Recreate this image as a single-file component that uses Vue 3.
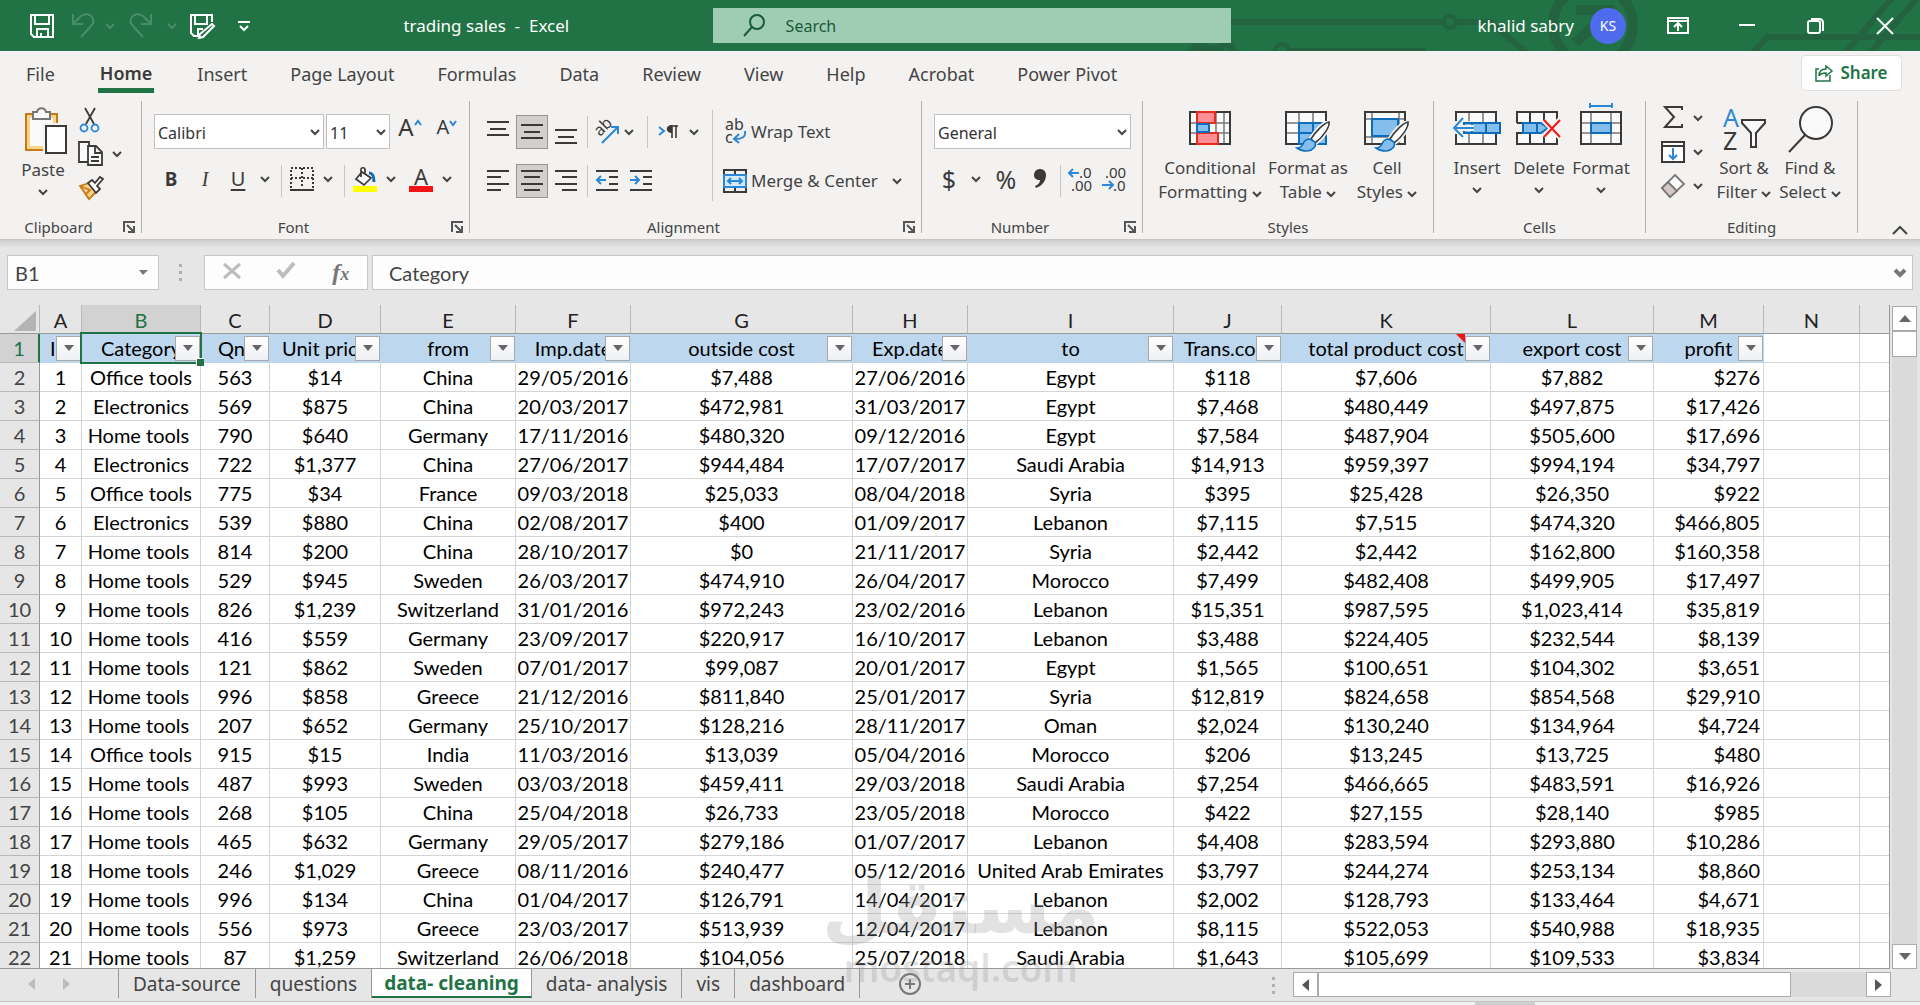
<script setup>
import { ref } from 'vue'

const ribbonTabs = ['File', 'Home', 'Insert', 'Page Layout', 'Formulas', 'Data', 'Review', 'View', 'Help', 'Acrobat', 'Power Pivot']
const activeTab = ref('Home')

const sheets = ['Data-source', 'questions', 'data- cleaning', 'data- analysis', 'vis', 'dashboard']
const activeSheet = ref('data- cleaning')

const cellValue = ref('Category')
const cellName = ref('B1')

const columns = [
  { id: 'A', width: 42, title: 'ID' },
  { id: 'B', width: 119, title: 'Category', selected: true },
  { id: 'C', width: 69, title: 'Qnt' },
  { id: 'D', width: 111, title: 'Unit price' },
  { id: 'E', width: 135, title: 'from' },
  { id: 'F', width: 115, title: 'Imp.date' },
  { id: 'G', width: 222, title: 'outside cost' },
  { id: 'H', width: 115, title: 'Exp.date' },
  { id: 'I', width: 206, title: 'to' },
  { id: 'J', width: 108, title: 'Trans.cost' },
  { id: 'K', width: 209, title: 'total product cost', note: true },
  { id: 'L', width: 163, title: 'export cost' },
  { id: 'M', width: 110, title: 'profit' },
]

const rows = [
  ['1', 'Office tools', '563', '$14', 'China', '29/05/2016', '$7,488', '27/06/2016', 'Egypt', '$118', '$7,606', '$7,882', '$276'],
  ['2', 'Electronics', '569', '$875', 'China', '20/03/2017', '$472,981', '31/03/2017', 'Egypt', '$7,468', '$480,449', '$497,875', '$17,426'],
  ['3', 'Home tools ', '790', '$640', 'Germany', '17/11/2016', '$480,320', '09/12/2016', 'Egypt', '$7,584', '$487,904', '$505,600', '$17,696'],
  ['4', 'Electronics', '722', '$1,377', 'China', '27/06/2017', '$944,484', '17/07/2017', 'Saudi Arabia', '$14,913', '$959,397', '$994,194', '$34,797'],
  ['5', 'Office tools', '775', '$34', 'France', '09/03/2018', '$25,033', '08/04/2018', 'Syria', '$395', '$25,428', '$26,350', '$922'],
  ['6', 'Electronics', '539', '$880', 'China', '02/08/2017', '$400', '01/09/2017', 'Lebanon', '$7,115', '$7,515', '$474,320', '$466,805'],
  ['7', 'Home tools ', '814', '$200', 'China', '28/10/2017', '$0', '21/11/2017', 'Syria', '$2,442', '$2,442', '$162,800', '$160,358'],
  ['8', 'Home tools ', '529', '$945', 'Sweden', '26/03/2017', '$474,910', '26/04/2017', 'Morocco', '$7,499', '$482,408', '$499,905', '$17,497'],
  ['9', 'Home tools ', '826', '$1,239', 'Switzerland', '31/01/2016', '$972,243', '23/02/2016', 'Lebanon', '$15,351', '$987,595', '$1,023,414', '$35,819'],
  ['10', 'Home tools ', '416', '$559', 'Germany', '23/09/2017', '$220,917', '16/10/2017', 'Lebanon', '$3,488', '$224,405', '$232,544', '$8,139'],
  ['11', 'Home tools ', '121', '$862', 'Sweden', '07/01/2017', '$99,087', '20/01/2017', 'Egypt', '$1,565', '$100,651', '$104,302', '$3,651'],
  ['12', 'Home tools ', '996', '$858', 'Greece', '21/12/2016', '$811,840', '25/01/2017', 'Syria', '$12,819', '$824,658', '$854,568', '$29,910'],
  ['13', 'Home tools ', '207', '$652', 'Germany', '25/10/2017', '$128,216', '28/11/2017', 'Oman', '$2,024', '$130,240', '$134,964', '$4,724'],
  ['14', 'Office tools', '915', '$15', 'India', '11/03/2016', '$13,039', '05/04/2016', 'Morocco', '$206', '$13,245', '$13,725', '$480'],
  ['15', 'Home tools ', '487', '$993', 'Sweden', '03/03/2018', '$459,411', '29/03/2018', 'Saudi Arabia', '$7,254', '$466,665', '$483,591', '$16,926'],
  ['16', 'Home tools ', '268', '$105', 'China', '25/04/2018', '$26,733', '23/05/2018', 'Morocco', '$422', '$27,155', '$28,140', '$985'],
  ['17', 'Home tools ', '465', '$632', 'Germany', '29/05/2017', '$279,186', '01/07/2017', 'Lebanon', '$4,408', '$283,594', '$293,880', '$10,286'],
  ['18', 'Home tools ', '246', '$1,029', 'Greece', '08/11/2016', '$240,477', '05/12/2016', 'United Arab Emirates', '$3,797', '$244,274', '$253,134', '$8,860'],
  ['19', 'Home tools ', '996', '$134', 'China', '01/04/2017', '$126,791', '14/04/2017', 'Lebanon', '$2,002', '$128,793', '$133,464', '$4,671'],
  ['20', 'Home tools ', '556', '$973', 'Greece', '23/03/2017', '$513,939', '12/04/2017', 'Lebanon', '$8,115', '$522,053', '$540,988', '$18,935'],
  ['21', 'Home tools ', '87', '$1,259', 'Switzerland', '26/06/2018', '$104,056', '25/07/2018', 'Saudi Arabia', '$1,643', '$105,699', '$109,533', '$3,834'],
]
</script>

<template>
  <div class="excel">
    <svg class="sprite" width="0" height="0" aria-hidden="true">
      <symbol id="chev" viewBox="0 0 10 8"><path d="M1 2l4 4 4-4" fill="none" stroke="currentColor" stroke-width="2" /></symbol>
      <symbol id="launch" viewBox="0 0 13 12">
        <path d="M1 11V1h11M4 4l7 7M11 5v6H5" fill="none" stroke="#555" stroke-width="2" />
      </symbol>
      <symbol id="brush" viewBox="0 0 36 32">
        <path d="M34 1c-5 1-13 9-18 17l4 4C28 16 35 6 34 1z" fill="#fff" stroke="#f3f2f1" stroke-width="5" />
        <path d="M34 1c-5 1-13 9-18 17l4 4C28 16 35 6 34 1z" fill="#fff" stroke="#3b3a39" stroke-width="1.6" />
        <path d="M15 18c-4 0-6 2-7 5-1 2-3 4-6 4 4 3 10 4 14 2s5-5 4-8z" fill="#83beec" stroke="#0f6cbd" stroke-width="1.6" />
      </symbol>
    </svg>

    <header class="titlebar">
      <svg class="circuit" width="740" height="51" viewBox="1180 0 740 51" fill="none" stroke="#24633f" stroke-width="6" aria-hidden="true">
        <path d="M1225 22h218M1457 22h33l38 32M1290 51h136M1765 37h155M1767 37l-16 18M1893-3l-48 56M1918-3l-48 56M1288 50l2 1" />
        <circle cx="1450" cy="22" r="6" stroke-width="4" /><circle cx="1282" cy="51" r="7" stroke-width="4" />
        <circle cx="1213" cy="62" r="23" stroke-width="8" /><path d="M1199 48h25" />
        <circle cx="1593" cy="25" r="40" stroke-width="10" />
        <path d="M1576 10h39M1611 10l-36 33" stroke-width="10" />
      </svg>
      <div class="quick">
        <button class="tb" aria-label="Save">
          <svg width="26" height="26" viewBox="0 0 26 26" fill="none" stroke="#fff" stroke-width="2"><path d="M2 2h22v22H5l-3-3zM6 2v9h14V2M8 24v-8h11v8M12 20v4" /></svg>
        </button>
        <button class="tb dim" aria-label="Undo">
          <svg width="26" height="26" viewBox="0 0 26 26" fill="none" stroke="currentColor" stroke-width="2"><path d="M3 1v10h10M3 11l8-8c4-3 9-2 11 1 3 4 1 7-1 9L11 24" /></svg>
        </button>
        <button class="tb dim" aria-label="Undo list"><svg width="10" height="8"><use href="#chev" /></svg></button>
        <button class="tb dim" aria-label="Redo">
          <svg width="26" height="26" viewBox="0 0 26 26" fill="none" stroke="currentColor" stroke-width="2"><path d="M23 1v10H13M23 11l-8-8c-4-3-9-2-11 1-3 4-1 7 1 9l10 11" /></svg>
        </button>
        <button class="tb dim" aria-label="Redo list"><svg width="10" height="8"><use href="#chev" /></svg></button>
        <button class="tb" aria-label="Save as">
          <svg width="26" height="26" viewBox="0 0 26 26" fill="none" stroke="#fff" stroke-width="2"><path d="M10 23H5l-3-3V2h21v7M6 2v9h12V2M9 23v-7h5M23 11l2 2-11 11-4 1 1-4z" /></svg>
        </button>
        <button class="tb" aria-label="Customize toolbar">
          <svg width="12" height="12" viewBox="0 0 12 12" fill="none" stroke="#fff" stroke-width="2"><path d="M0 2h12M2 6l4 4 4-4" /></svg>
        </button>
      </div>
      <h1 class="title">trading sales&nbsp; -&nbsp; Excel</h1>
      <label class="search">
        <svg width="24" height="24" viewBox="0 0 24 24" fill="none" stroke="#185c37" stroke-width="2"><circle cx="15" cy="8" r="7" /><path d="M10 13L2 22" /></svg>
        <input type="text" placeholder="Search" aria-label="Search" />
      </label>
      <div class="account">
        <span>khalid sabry</span>
        <span class="avatar">KS</span>
      </div>
      <div class="window-buttons">
        <button class="tb" aria-label="Ribbon display options">
          <svg width="22" height="18" viewBox="0 0 22 18" fill="none" stroke="#fff" stroke-width="2"><path d="M1 1h20v15H1zM1 4h20M11 14V7M7 10l4-4 4 4" /></svg>
        </button>
        <button class="tb" aria-label="Minimize"><svg width="16" height="16" viewBox="0 0 16 16" stroke="#fff" stroke-width="2"><path d="M0 7h16" /></svg></button>
        <button class="tb" aria-label="Restore">
          <svg width="18" height="18" viewBox="0 0 18 18" fill="none" stroke="#fff" stroke-width="2"><rect x="1" y="4" width="12" height="12" rx="2" /><path d="M4 2h8c3 0 4 1 4 4v8" /></svg>
        </button>
        <button class="tb" aria-label="Close"><svg width="18" height="18" viewBox="0 0 18 18" stroke="#fff" stroke-width="2"><path d="M1 1l16 16M17 1L1 17" /></svg></button>
      </div>
    </header>

    <nav class="tabs">
      <button v-for="tab in ribbonTabs" :key="tab" class="tab" :class="{ active: tab === activeTab }" @click="activeTab = tab">{{ tab }}</button>
      <button class="share">
        <svg width="18" height="18" viewBox="0 0 18 18" fill="none" stroke="#217346" stroke-width="1.5"><path d="M4 5H1v12h14v-6M4 12c0-5 3-7 7-7V2l6 5-6 5V9c-4 0-6 1-7 3z" /></svg>
        Share
      </button>
    </nav>

    <section class="ribbon">
      <div class="group clipboard">
        <div class="body">
          <button class="big paste">
            <svg width="48" height="48" viewBox="-6 0 48 48">
              <path d="M1 7h31v36H1z" fill="#fbd38a" stroke="#c87a16" stroke-width="2" /><path d="M5 11h23v28H5z" fill="#fafafa" />
              <path d="M8 12V5h4c1-5 8-5 9 0h4v7z" fill="#fafafa" stroke="#797775" stroke-width="2" />
              <path d="M18 16h24v32H18z" fill="#f3f2f1" /><path d="M21 19h20v27H21z" fill="#fff" stroke="#3b3a39" stroke-width="2" />
            </svg>
            <span>Paste</span>
            <svg width="10" height="8"><use href="#chev" /></svg>
          </button>
          <div class="stack">
            <button class="ico" aria-label="Cut">
              <svg width="24" height="26" viewBox="0 0 24 26" fill="none" stroke-width="1.8"><path d="M7 1l9 16M17 1L8 17" stroke="#3b3a39" /><circle cx="6" cy="21" r="3.5" stroke="#2b88d8" /><circle cx="17" cy="21" r="3.5" stroke="#2b88d8" /></svg>
            </button>
            <button class="ico" aria-label="Copy">
              <svg width="26" height="26" viewBox="0 0 26 26" fill="#fafafa" stroke="#3b3a39" stroke-width="1.8"><path d="M1 1h10v20H1z" /><path d="M10 5h8l6 6v13H10zM17 5v7h7M13 16h8M13 20h8" /></svg>
              <svg width="10" height="8"><use href="#chev" /></svg>
            </button>
            <button class="ico" aria-label="Format Painter">
              <svg width="26" height="24" viewBox="0 0 26 24" stroke-width="1.8"><path d="M2 10l9-3 8 8-8 8z" fill="#fbd38a" stroke="#c87a16" /><path d="M2 10l10 4-4 4" fill="none" stroke="#c87a16" /><path d="M10 7l4-3 3 3 5-6 3 2-6 7 3 3-4 4z" fill="#fff" stroke="#3b3a39" /></svg>
            </button>
          </div>
        </div>
        <div class="foot"><span>Clipboard</span><button class="launcher" aria-label="Clipboard settings"><svg width="13" height="12"><use href="#launch" /></svg></button></div>
      </div>
      <i class="rule"></i>

      <div class="group font">
        <div class="body rows">
          <div class="row font-top">
            <span class="combo"><select aria-label="Font"><option>Calibri</option></select><svg width="10" height="8"><use href="#chev" /></svg></span>
            <span class="combo"><select aria-label="Font size"><option>11</option></select><svg width="10" height="8"><use href="#chev" /></svg></span>
            <button class="ico letter grow" aria-label="Increase font size">A<svg width="8" height="8" viewBox="0 0 8 8" fill="none" stroke="#2b88d8" stroke-width="2"><path d="M1 6l3-4 3 4" /></svg></button>
            <button class="ico letter shrink" aria-label="Decrease font size">A<svg width="8" height="8" viewBox="0 0 8 8" fill="none" stroke="#2b88d8" stroke-width="2"><path d="M1 2l3 4 3-4" /></svg></button>
          </div>
          <div class="row font-bottom">
            <button class="ico glyph"><b>B</b></button>
            <button class="ico glyph serif"><i>I</i></button>
            <button class="ico glyph"><u>U</u></button>
            <button class="ico" aria-label="Underline styles"><svg width="10" height="8"><use href="#chev" /></svg></button>
            <i class="tick"></i>
            <button class="ico" aria-label="Borders">
              <svg width="24" height="24" viewBox="0 0 24 24" fill="none" stroke="#3b3a39" stroke-width="2"><path d="M1 21V1h22v20M12 1v20M1 11h22" stroke-dasharray="2 2" /><path d="M0 23h24" /></svg>
            </button>
            <button class="ico" aria-label="Border styles"><svg width="10" height="8"><use href="#chev" /></svg></button>
            <i class="tick"></i>
            <button class="ico" aria-label="Fill colour">
              <svg width="26" height="26" viewBox="0 0 26 26"><path d="M10 6l9 6-7 7-8-6zM9 11V4c0-3 4-3 4 0v4" fill="#fff" stroke="#3b3a39" stroke-width="1.7" /><path d="M17 7c4 0 5 3 5 9" fill="none" stroke="#0f6cbd" stroke-width="3" /><path d="M1 20h24v6H1z" fill="#ff0" /></svg>
            </button>
            <button class="ico" aria-label="Fill colours"><svg width="10" height="8"><use href="#chev" /></svg></button>
            <button class="ico color" aria-label="Font colour"><span>A</span></button>
            <button class="ico" aria-label="Font colours"><svg width="10" height="8"><use href="#chev" /></svg></button>
          </div>
        </div>
        <div class="foot"><span>Font</span><button class="launcher" aria-label="Font settings"><svg width="13" height="12"><use href="#launch" /></svg></button></div>
      </div>
      <i class="rule"></i>

      <div class="group alignment">
        <div class="body split">
          <div class="rows">
            <div class="row align-top">
              <button class="ico" aria-label="Top align"><svg class="ln" width="24" height="24" viewBox="0 0 24 24"><path d="M1 2h22M4 9h16M1 15h22" /></svg></button>
              <button class="ico on" aria-label="Middle align"><svg class="ln" width="24" height="24" viewBox="0 0 24 24"><path d="M1 5h22M4 12h16M1 18h22" /></svg></button>
              <button class="ico" aria-label="Bottom align"><svg class="ln" width="24" height="24" viewBox="0 0 24 24"><path d="M1 10h22M4 17h16M1 23h22" /></svg></button>
              <i class="tick"></i>
              <button class="ico" aria-label="Orientation">
                <svg width="26" height="26" viewBox="0 0 26 26"><text x="6" y="18" transform="rotate(-45 6 18)" font-size="16" fill="#3b3a39">ab</text><path d="M8 24L24 8M17 8h7v7" fill="none" stroke="#2b88d8" stroke-width="2" /></svg>
              </button>
              <button class="ico" aria-label="Orientations"><svg width="10" height="8"><use href="#chev" /></svg></button>
              <i class="tick"></i>
              <button class="ico" aria-label="Text direction">
                <svg width="20" height="16" viewBox="0 0 20 16" fill="none" stroke-width="2"><path d="M1 3l5 4-5 4" stroke="#2b88d8" /><path d="M20 2h-8M14 1v13M18 1v13" stroke="#3b3a39" stroke-width="1.6" /><path d="M14 1c-7 0-7 8 0 8z" fill="#3b3a39" /></svg>
              </button>
              <button class="ico" aria-label="Text directions"><svg width="10" height="8"><use href="#chev" /></svg></button>
            </div>
            <div class="row align-bottom">
              <button class="ico" aria-label="Align left"><svg class="ln" width="24" height="24" viewBox="0 0 24 24"><path d="M1 2h22M1 8h14M1 15h22M1 21h14" /></svg></button>
              <button class="ico on" aria-label="Center"><svg class="ln" width="24" height="24" viewBox="0 0 24 24"><path d="M1 2h22M4 8h16M1 15h22M4 21h16" /></svg></button>
              <button class="ico" aria-label="Align right"><svg class="ln" width="24" height="24" viewBox="0 0 24 24"><path d="M1 2h22M8 8h15M1 15h22M8 21h15" /></svg></button>
              <i class="tick"></i>
              <button class="ico" aria-label="Decrease indent"><svg class="ln" width="24" height="24" viewBox="0 0 24 24"><path d="M1 2h22M14 8h9M14 15h9M1 21h22" /><path class="blue" d="M11 11H2M6 7l-4 4 4 4" /></svg></button>
              <button class="ico" aria-label="Increase indent"><svg class="ln" width="24" height="24" viewBox="0 0 24 24"><path d="M1 2h22M14 8h9M14 15h9M1 21h22" /><path class="blue" d="M1 11h9M6 7l4 4-4 4" /></svg></button>
            </div>
          </div>
          <i class="tick tall"></i>
          <div class="rows">
            <button class="row labelled">
              <svg width="26" height="30" viewBox="0 0 26 30"><text x="4" y="13" font-size="16" fill="#3b3a39">ab</text><text x="4" y="26" font-size="16" fill="#3b3a39">c</text><path d="M24 14c1 6-3 8-10 8M18 17l-5 5 5 4" fill="none" stroke="#2b88d8" stroke-width="2" /></svg>
              <span>Wrap Text</span>
            </button>
            <button class="row labelled">
              <svg width="26" height="24" viewBox="0 0 26 24" fill="none" stroke="#3b3a39" stroke-width="2"><path d="M3 1h22v22H3zM14 1v4M14 19v4" /><path d="M3 6h22v12H3z" fill="#d4e9f9" stroke="#2b88d8" /><path d="M7 12h14M10 9l-3 3 3 3M18 9l3 3-3 3" stroke="#2b88d8" /></svg>
              <span>Merge &amp; Center</span>
              <svg width="10" height="8"><use href="#chev" /></svg>
            </button>
          </div>
        </div>
        <div class="foot"><span>Alignment</span><button class="launcher" aria-label="Alignment settings"><svg width="13" height="12"><use href="#launch" /></svg></button></div>
      </div>
      <i class="rule"></i>

      <div class="group number">
        <div class="body rows">
          <span class="combo"><select aria-label="Number format"><option>General</option></select><svg width="10" height="8"><use href="#chev" /></svg></span>
          <div class="row number-bottom">
            <button class="ico symbol">$</button>
            <button class="ico" aria-label="Currencies"><svg width="10" height="8"><use href="#chev" /></svg></button>
            <button class="ico symbol">%</button>
            <button class="ico" aria-label="Comma style"><svg width="12" height="20" viewBox="0 0 12 20"><path d="M6 0c4 0 6 3 6 6 0 6-4 11-10 13l-1-2c3-1 5-3 5-6-4 0-6-2-6-5s2-6 6-6z" fill="#3b3a39" /></svg></button>
            <i class="tick"></i>
            <button class="ico" aria-label="Increase decimal"><svg width="26" height="26" viewBox="0 0 26 26"><text x="12" y="12" font-size="15" fill="#3b3a39">.0</text><text x="4" y="25" font-size="15" fill="#3b3a39">.00</text><path d="M12 7H2M6 3L2 7l4 4" fill="none" stroke="#2b88d8" stroke-width="2" /></svg></button>
            <button class="ico" aria-label="Decrease decimal"><svg width="26" height="26" viewBox="0 0 26 26"><text x="4" y="12" font-size="15" fill="#3b3a39">.00</text><text x="12" y="25" font-size="15" fill="#3b3a39">.0</text><path d="M1 19h11M8 15l4 4-4 4" fill="none" stroke="#2b88d8" stroke-width="2" /></svg></button>
          </div>
        </div>
        <div class="foot"><span>Number</span><button class="launcher" aria-label="Number settings"><svg width="13" height="12"><use href="#launch" /></svg></button></div>
      </div>
      <i class="rule"></i>

      <div class="group styles">
        <div class="body bigs">
          <button class="big">
            <svg width="42" height="42" viewBox="0 0 42 42">
              <path d="M1 1h40v32H1zM8 1v32M27 1v32M35 1v32M1 12h40M1 22h40" fill="#fafafa" stroke="#797775" stroke-width="1.5" /><path d="M1 1h40v32H1z" fill="none" stroke="#3b3a39" stroke-width="2" />
              <path d="M8 1h18v11H8zM8 22h21v11H8z" fill="#ff8f94" stroke="#e8291c" stroke-width="2" /><path d="M8 13h12v8H8z" fill="#83beec" stroke="#0f6cbd" stroke-width="2" />
            </svg>
            <span>Conditional</span><span>Formatting <svg width="10" height="8"><use href="#chev" /></svg></span>
          </button>
          <button class="big">
            <svg width="46" height="42" viewBox="0 0 46 42">
              <path d="M1 1h40v32H1z" fill="#fafafa" /><path d="M14 12h27v21H14z" fill="#83beec" />
              <path d="M14 1v32M28 1v32M1 12h40M1 22h40" stroke="#797775" stroke-width="1.5" /><path d="M41 10V1H1v32h13" fill="none" stroke="#3b3a39" stroke-width="2" /><path d="M14 33V12h27v21zM28 12v21M14 22h27" fill="none" stroke="#0f6cbd" stroke-width="2" />
              <use href="#brush" x="10" y="10" width="36" height="32" />
            </svg>
            <span>Format as</span><span>Table <svg width="10" height="8"><use href="#chev" /></svg></span>
          </button>
          <button class="big">
            <svg width="46" height="42" viewBox="0 0 46 42">
              <path d="M1 1h40v32H1zM8 1v32M35 1v32M1 8h40M1 26h40" fill="#fafafa" stroke="#797775" stroke-width="1.5" /><path d="M1 1h40v32H1z" fill="none" stroke="#3b3a39" stroke-width="2" />
              <path d="M8 8h26v17H8z" fill="#83beec" stroke="#0f6cbd" stroke-width="2" />
              <use href="#brush" x="10" y="10" width="36" height="32" />
            </svg>
            <span>Cell</span><span>Styles <svg width="10" height="8"><use href="#chev" /></svg></span>
          </button>
        </div>
        <div class="foot"><span>Styles</span></div>
      </div>
      <i class="rule"></i>

      <div class="group cells">
        <div class="body bigs">
          <button class="big">
            <svg width="50" height="42" viewBox="0 0 50 42">
              <path d="M4 1h40v32H4zM17 1v32M31 1v32" fill="#fafafa" stroke="#797775" stroke-width="1.5" /><path d="M4 1h40v32H4z" fill="none" stroke="#3b3a39" stroke-width="2" />
              <path d="M2 10h16v13H2z" fill="#f3f2f1" /><path d="M12 12h36v10H12z" fill="#83beec" stroke="#0f6cbd" stroke-width="2" /><path d="M20 12v10M34 12v10" stroke="#0f6cbd" stroke-width="2" />
              <path d="M22 17H4" stroke="#f3f2f1" stroke-width="6" /><path d="M22 17H2M11 7L2 17l9 9" fill="none" stroke="#2b88d8" stroke-width="2" />
            </svg>
            <span>Insert</span><svg width="10" height="8"><use href="#chev" /></svg>
          </button>
          <button class="big">
            <svg width="46" height="42" viewBox="0 0 46 42">
              <path d="M1 12V1h40v11M41 22v11H1V22h7M1 12h6M14 1v11M28 1v11M14 22v11M28 22v11" fill="#fafafa" stroke="#3b3a39" stroke-width="2" />
              <path d="M7 12h18l7 5-7 5H7z" fill="#83beec" stroke="#0f6cbd" stroke-width="2" /><path d="M21 12v10" stroke="#0f6cbd" stroke-width="2" />
              <path d="M28 9l16 17M44 9L28 26" stroke="#f3f2f1" stroke-width="6" /><path d="M28 9l16 17M44 9L28 26" stroke="#f01818" stroke-width="2" />
            </svg>
            <span>Delete</span><svg width="10" height="8"><use href="#chev" /></svg>
          </button>
          <button class="big">
            <svg width="42" height="42" viewBox="0 0 42 42">
              <path d="M1 1h40v32H1zM11 1v32M31 1v32M1 12h40M1 22h40" fill="#fafafa" stroke="#797775" stroke-width="1.5" /><path d="M1 1h40v32H1z" fill="none" stroke="#3b3a39" stroke-width="2" />
              <path d="M11 12h20v10H11z" fill="#83beec" stroke="#0f6cbd" stroke-width="2" /><path d="M10-5h22M10-8v5M32-8v5" stroke="#2b88d8" stroke-width="2" />
            </svg>
            <span>Format</span><svg width="10" height="8"><use href="#chev" /></svg>
          </button>
        </div>
        <div class="foot"><span>Cells</span></div>
      </div>
      <i class="rule"></i>

      <div class="group editing">
        <div class="body">
          <div class="stack">
            <button class="ico" aria-label="AutoSum"><svg width="24" height="24" viewBox="0 0 24 24" fill="none" stroke="#3b3a39" stroke-width="2"><path d="M21 4V1H4l9 10-9 10h17v-3" /></svg><svg width="10" height="8"><use href="#chev" /></svg></button>
            <button class="ico" aria-label="Fill"><svg width="24" height="22" viewBox="0 0 24 22" fill="#fff" stroke="#3b3a39" stroke-width="2"><path d="M1 1h22v20H1zM1 5h22" /><path d="M12 7v11M8 14l4 4 4-4" fill="none" stroke="#2b88d8" /></svg><svg width="10" height="8"><use href="#chev" /></svg></button>
            <button class="ico" aria-label="Clear"><svg width="24" height="24" viewBox="0 0 24 24" stroke="#797775" stroke-width="1.8"><path d="M14 1l9 9L9 23l-8-9z" fill="#fff" /><path d="M7 8l9 9-7 6-8-9z" fill="#d6c6c8" /></svg><svg width="10" height="8"><use href="#chev" /></svg></button>
          </div>
          <button class="big">
            <svg width="44" height="46" viewBox="0 0 44 46"><text x="1" y="20" font-size="25" fill="#2b88d8">A</text><text x="1" y="43" font-size="25" fill="#3b3a39">Z</text><path d="M20 13h23v3l-9 10v14h-5V26l-9-10z" fill="#fafafa" stroke="#3b3a39" stroke-width="2" /></svg>
            <span>Sort &amp;</span><span>Filter <svg width="10" height="8"><use href="#chev" /></svg></span>
          </button>
          <button class="big">
            <svg width="46" height="46" viewBox="0 0 46 46" stroke="#3b3a39" stroke-width="2"><circle cx="29" cy="16" r="16" fill="#fafafa" /><path d="M18 28L2 45" /></svg>
            <span>Find &amp;</span><span>Select <svg width="10" height="8"><use href="#chev" /></svg></span>
          </button>
        </div>
        <div class="foot"><span>Editing</span></div>
      </div>
      <i class="rule"></i>
      <button class="collapse" aria-label="Collapse ribbon"><svg width="16" height="10" viewBox="0 0 16 10" fill="none" stroke="#444" stroke-width="2"><path d="M1 9l7-7 7 7" /></svg></button>
    </section>

    <section class="formula">
      <label class="field name"><input v-model="cellName" aria-label="Name box" /><svg width="9" height="6" viewBox="0 0 9 6"><path d="M0 0h9L4 5z" fill="#777" /></svg></label>
      <svg class="dots" width="4" height="18" viewBox="0 0 4 18" fill="#b0b0b0"><path d="M0 0h3v3H0zM0 7h3v3H0zM0 14h3v3H0z" /></svg>
      <div class="field actions">
        <button aria-label="Cancel"><svg width="18" height="16" viewBox="0 0 18 16" stroke="#bdbdbd" stroke-width="3"><path d="M1 1l16 14M17 1L1 15" /></svg></button>
        <button aria-label="Enter"><svg width="20" height="18" viewBox="0 0 20 18" fill="none" stroke="#bdbdbd" stroke-width="4"><path d="M2 9l5 6L18 2" /></svg></button>
        <button class="fx" aria-label="Insert function"><i>f</i><i class="x">x</i></button>
      </div>
      <label class="field value"><input v-model="cellValue" aria-label="Formula bar" /><svg width="12" height="10" viewBox="0 0 12 10" fill="none" stroke="#777" stroke-width="4"><path d="M1 2l5 5 5-5" /></svg></label>
    </section>

    <main class="work">
      <div class="sheet">
        <table>
          <colgroup>
            <col class="rownum-col" />
            <col v-for="c in columns" :key="c.id" :style="{ width: c.width + 'px' }" />
            <col class="blank-col" />
            <col />
          </colgroup>
          <thead>
            <tr>
              <th class="corner"><svg width="22" height="20" viewBox="0 0 22 20"><path d="M22 0v20H0z" fill="#b4b4b4" /></svg></th>
              <th v-for="c in columns" :key="c.id" :class="{ picked: c.selected }">{{ c.id }}</th>
              <th>N</th>
              <th></th>
            </tr>
          </thead>
          <tbody>
            <tr class="headings">
              <th class="picked">1</th>
              <td v-for="c in columns" :key="c.id" :class="{ current: c.selected }">
                <span class="caption">{{ c.title }}</span>
                <i v-if="c.note" class="note"></i>
                <button class="filter" :aria-label="'Filter ' + c.title"><svg width="10" height="7" viewBox="0 0 10 7"><path d="M0 0h10L5 6z" fill="#666" /></svg></button>
                <i v-if="c.selected" class="cursor"></i>
              </td>
              <td class="plain"></td>
              <td class="plain"></td>
            </tr>
            <tr v-for="(row, i) in rows" :key="i">
              <th>{{ i + 2 }}</th>
              <td v-for="(value, j) in row" :key="j" :class="{ money: j === 12 }">{{ value }}</td>
              <td></td>
              <td></td>
            </tr>
          </tbody>
        </table>
      </div>
      <div class="vscroll">
        <button aria-label="Scroll up"><svg width="12" height="7" viewBox="0 0 12 7"><path d="M6 0l6 7H0z" fill="#666" /></svg></button>
        <div class="vthumb"></div>
        <button class="end" aria-label="Scroll down"><svg width="12" height="7" viewBox="0 0 12 7"><path d="M0 0h12L6 7z" fill="#666" /></svg></button>
      </div>
    </main>

    <footer class="bottom">
      <div class="arrows">
        <svg width="7" height="12" viewBox="0 0 7 12"><path d="M7 0v12L0 6z" fill="#bdbdbd" /></svg>
        <svg width="7" height="12" viewBox="0 0 7 12"><path d="M0 0v12l7-6z" fill="#bdbdbd" /></svg>
      </div>
      <button v-for="s in sheets" :key="s" class="sheet-tab" :class="{ active: s === activeSheet }" @click="activeSheet = s">{{ s }}</button>
      <button class="add" aria-label="New sheet"><svg width="24" height="24" viewBox="0 0 24 24" fill="none" stroke="#777"><circle cx="12" cy="12" r="10" stroke-width="2" /><path d="M12 7v10M7 12h10" stroke-width="2" /></svg></button>
      <svg class="dots grip" width="4" height="18" viewBox="0 0 4 18" fill="#b0b0b0"><path d="M0 0h3v3H0zM0 7h3v3H0zM0 14h3v3H0z" /></svg>
      <div class="hscroll">
        <button aria-label="Scroll left"><svg width="7" height="12" viewBox="0 0 7 12"><path d="M7 0v12L0 6z" fill="#555" /></svg></button>
        <div class="hthumb"></div>
        <button class="end" aria-label="Scroll right"><svg width="7" height="12" viewBox="0 0 7 12"><path d="M0 0v12l7-6z" fill="#555" /></svg></button>
      </div>
    </footer>
    <div class="status"><i></i></div>

    <div class="watermark" aria-hidden="true">
      <span class="ar" lang="ar">مستقل</span>
      <span class="en">mostaql.com</span>
    </div>
  </div>
</template>

<style>
body { margin: 0; }
</style>

<style scoped>
.excel {
  position: relative;
  display: flex;
  flex-direction: column;
  height: 100vh;
  overflow: hidden;
  background: #e6e6e6;
  color: #444;
  font: 17px/24px "Noto Sans", "Open Sans", sans-serif;
}
.excel * { box-sizing: border-box; }
.sprite { position: absolute; }
button { border: 0; padding: 0; margin: 0; background: none; color: inherit; font: inherit; }
svg { flex: none; overflow: visible; }

.titlebar { position: relative; display: flex; align-items: center; flex: none; height: 51px; background: #217346; color: #fff; }
.circuit { position: absolute; right: 0; top: 0; overflow: hidden; }
.titlebar > :not(.circuit) { position: relative; }
.quick { display: grid; grid-template-columns: 38px 44px 10px 52px 10px 50px 34px; padding-left: 23px; width: 356px; }
.tb { display: flex; align-items: center; justify-content: center; min-width: 10px; height: 36px; }
.dim { color: #4a8d69; }
.title { margin: 0; flex: 1 1 0; min-width: 0; padding-right: 96px; text-align: center; font-size: 17px; font-weight: 400; white-space: nowrap; }
.search { display: flex; align-items: center; gap: 20px; width: 27%; height: 35px; padding-left: 29px; background: #9fcdb3; }
.search input { flex: 1; min-width: 0; border: 0; padding: 0; background: none; font: inherit; font-size: 16px; color: #185c37; }
.search input::placeholder { color: #185c37; opacity: 1; }
.account { display: flex; align-items: center; justify-content: flex-end; gap: 16px; width: 395px; }
.avatar { width: 36px; height: 36px; border-radius: 50%; background: #4f6bed; font-size: 14px; line-height: 36px; text-align: center; }
.window-buttons { display: flex; width: 294px; padding: 0 17px 0 34px; justify-content: space-between; }
.window-buttons .tb { width: 36px; }

.tabs { display: flex; align-items: flex-start; flex: none; gap: 43px; height: 50px; padding: 4px 18px 0 26px; background: #f3f2f1; }
.tab { height: 38px; font-size: 18px; line-height: 36px; white-space: nowrap; }
.tab.active { padding: 0 2px; border-bottom: 5px solid #217346; font-weight: 600; color: #3b3a39; }
.share { display: flex; align-items: center; justify-content: center; gap: 7px; width: 101px; height: 36px; margin-left: auto; border: 1px solid #e1dfdd; border-radius: 4px; background: #fff; color: #217346; font-weight: 600; }

.ribbon { display: flex; align-items: flex-start; flex: none; height: 139px; background: #f3f2f1; border-bottom: 1px solid #c8c6c4; }
.rule { width: 1px; height: 132px; background: #b3b0ad; }
.group { display: flex; flex-direction: column; height: 136px; }
.clipboard { width: 141px; }
.font { width: 327px; }
.alignment { width: 451px; }
.number { width: 220px; }
.styles { width: 290px; }
.cells { width: 211px; }
.editing { width: 211px; }
.body { display: flex; height: 116px; }
.foot { display: flex; align-items: center; height: 20px; }
.foot span { flex: 1; text-align: center; font-size: 15px; line-height: 20px; }
.launcher { display: flex; justify-content: center; width: 24px; }
.rows { display: flex; flex-direction: column; gap: 14px; padding-top: 13px; }
.row { display: grid; align-items: center; height: 35px; }
.ico { display: flex; align-items: center; justify-content: center; gap: 8px; height: 34px; }
.tick { justify-self: center; width: 1px; height: 32px; background: #c8c6c4; }

.big { display: flex; flex-direction: column; align-items: center; }
.big > svg:first-child { margin-bottom: 3px; }
.big > span { white-space: nowrap; }
.big > span + svg { margin-top: 6px; }
.clipboard .paste { width: 74px; padding: 6px 2px 0 14px; }
.stack { display: flex; flex-direction: column; }
.clipboard .stack { padding: 2px 0 0 4px; }
.stack .ico { justify-content: flex-start; }

.font .rows { padding-left: 12px; }
.font-top { grid-template-columns: 170px 64px 36px 34px; column-gap: 2px; }
.font-bottom { grid-template-columns: 34px 34px 32px 22px 10px 32px 20px 12px 30px 22px 38px 14px; }
.font-bottom .ico, .number-bottom .ico { padding-bottom: 3px; }
.combo { position: relative; display: block; height: 35px; }
.combo select { width: 100%; height: 35px; padding: 2px 3px 0; border: 1px solid #c3c1bf; border-radius: 0; background: #fff; appearance: none; color: #333; font: inherit; font-size: 16px; }
.combo svg { position: absolute; right: 4px; top: 14px; pointer-events: none; }
.letter { align-items: flex-start; gap: 0; color: #3b3a39; }
.grow { font-size: 24px; }
.shrink { font-size: 20px; }
.letter svg { margin-top: 4px; }
.glyph { font-size: 20px; color: #3b3a39; }
.glyph b { font-weight: 700; font-size: 19px; }
.glyph u { text-underline-offset: 3px; }
.serif { font-family: "Liberation Serif", serif; }
.color span { width: 24px; height: 25px; border-bottom: 6px solid #f01414; font-size: 22px; line-height: 18px; color: #3b3a39; }

.split .rows:first-child { padding-left: 11px; }
.align-top, .align-bottom { justify-content: start; }
.align-top { grid-template-columns: 34px 34px 34px 8px 32px 12px 24px 18px 34px; }
.align-bottom { grid-template-columns: 34px 34px 34px 8px 32px 36px; }
.ln { fill: none; stroke: #3b3a39; stroke-width: 2; }
.ln .blue { stroke: #2b88d8; }
.on { width: 32px; justify-self: center; border: 1px solid #979593; background: #d2d0ce; }
.tall { height: 91px; margin: 9px 8px 0 1px; }
.labelled { display: flex; gap: 4px; }
.labelled span { white-space: nowrap; }
.labelled span + svg { margin-left: 10px; }

.number .rows { padding-left: 12px; padding-right: 11px; }
.number-bottom { grid-template-columns: 30px 24px 36px 32px 8px 32px 35px; }
.symbol { font-size: 25px; color: #3b3a39; }

.bigs { padding-top: 10px; }
.styles .bigs { padding-left: 13px; }
.styles .big { width: 70px; }
.styles .big:nth-child(1) { width: 108px; }
.styles .big:nth-child(2) { width: 88px; }
.cells .bigs { padding-left: 12px; }
.cells .big { width: 62px; }
.editing .body { padding-left: 15px; }
.editing .stack { width: 50px; }
.editing .big { width: 66px; padding-top: 6px; }
.collapse { align-self: flex-end; margin: 0 12px 4px auto; line-height: 10px; display: flex; }

.formula { display: flex; align-items: flex-start; flex: none; height: 65px; padding: 15px 7px 0; background: linear-gradient(#cfcfcf, #e6e6e6 8px); }
.field { display: flex; align-items: center; height: 35px; border: 1px solid #c6c6c6; background: #fdfdfd; }
.field input { flex: 1; min-width: 0; border: 0; padding: 0; background: none; color: #444; font: 20px/24px Lato, "Noto Sans", sans-serif; }
.name { width: 152px; padding: 0 10px 0 7px; }
.dots { align-self: flex-start; margin: 9px 21px 0 20px; }
.actions { width: 164px; margin-right: 4px; justify-content: space-around; }
.fx { font: 700 24px/28px "Liberation Serif", serif; color: #777; }
.fx .x { font-size: 18px; }
.value { flex: 1; padding: 0 6px 0 16px; }

.work { display: flex; flex: 1; min-height: 0; }
.sheet { flex: 1; min-width: 0; overflow: hidden; border-bottom: 1px solid #999; }
table { width: 100%; table-layout: fixed; border-collapse: separate; border-spacing: 0; background: #fff; color: #000; font: 20px/28px Lato, "Noto Sans", sans-serif; border-right: 1px solid #999; }
.rownum-col { width: 40px; }
.blank-col { width: 96px; }
td, th { height: 29px; padding: 0; border-right: 1px solid #d4d4d4; border-bottom: 1px solid #d4d4d4; text-align: center; font-weight: 400; white-space: pre; }
thead th { padding-top: 2px; background: #e6e6e6; border-right-color: #b8b8b8; border-bottom-color: #999; color: #222; line-height: 26px; }
tbody th { background: #e6e6e6; border-right-color: #999; border-bottom-color: #b8b8b8; color: #444; }
.corner { text-align: right; padding-right: 3px; }
.corner svg { display: block; margin-left: auto; margin-top: 2px; }
thead .picked, tbody .picked { background: #d2d2d2; color: #217346; }
tbody .picked { border-right: 2px solid #217346; }
td:last-child, thead th:last-child { border-right: 0; }
.money { text-align: right; padding-right: 3px; }
.headings td { position: relative; overflow: hidden; background: #bdd7ee; border-color: #bdd7ee; }
.headings .plain { background: #fff; border-color: #d4d4d4; }
.headings .current { overflow: visible; }
.caption { display: block; margin: 0 -30px; }
.filter { position: absolute; right: 0; top: 2px; display: flex; align-items: center; justify-content: center; width: 25px; height: 25px; border: 1px solid #a8a8a8; background: linear-gradient(#fff, #eef0f4); }
.note { position: absolute; right: 25px; top: 0; border-top: 9px solid #f01414; border-left: 9px solid transparent; }
.cursor { position: absolute; z-index: 1; inset: -2px; border: 2px solid #217346; pointer-events: none; }
.cursor::after { content: ""; position: absolute; right: -4px; bottom: -4px; width: 7px; height: 7px; border: 1px solid #fff; border-right: 0; border-bottom: 0; background: #217346; }

.vscroll { display: flex; flex-direction: column; flex: none; width: 25px; margin: 1px 3px 0 2px; background: #dadada; }
.vscroll button, .hscroll button { display: flex; align-items: center; justify-content: center; flex: none; width: 25px; height: 25px; border: 1px solid #ababab; background: #fff; }
.vthumb { height: 26px; border: 1px solid #ababab; background: #fff; }
.vscroll .end { margin-top: auto; }

.bottom { display: flex; align-items: flex-start; flex: none; height: 33px; border-bottom: 1px solid #c6c6c6; }
.arrows { display: flex; justify-content: space-between; align-items: center; width: 118px; height: 30px; padding: 0 48px 0 28px; }
.sheet-tab { height: 29px; padding: 0 14px; border-right: 1px solid #999; font-size: 19px; line-height: 28px; white-space: nowrap; }
.arrows + .sheet-tab { border-left: 1px solid #999; }
.sheet-tab.active { padding: 0 12px; border-bottom: 2px solid #217346; background: #fff; color: #217346; font-weight: 700; }
.add { display: flex; margin: 3px 0 0 38px; }
.grip { margin: 8px 17px 0 auto; }
.hscroll { display: flex; width: 598px; height: 25px; margin: 3px 29px 0 0; background: #dadada; }
.hthumb { width: 473px; border: 1px solid #ababab; background: #fff; }
.hscroll .end { margin-left: auto; }
.status { flex: none; height: 3px; background: #f3f2f1; }
.status i { display: block; width: 60px; height: 3px; margin-left: auto; margin-right: 385px; background: #cfcfcf; }

.watermark { position: absolute; left: 44%; bottom: 18px; display: flex; flex-direction: column; align-items: center; width: 232px; color: rgba(150, 150, 150, .28); pointer-events: none; }
.ar { font: 700 76px/84px "DejaVu Sans", sans-serif; white-space: nowrap; }
.en { font: 600 37px/38px "Noto Sans", sans-serif; }
</style>
